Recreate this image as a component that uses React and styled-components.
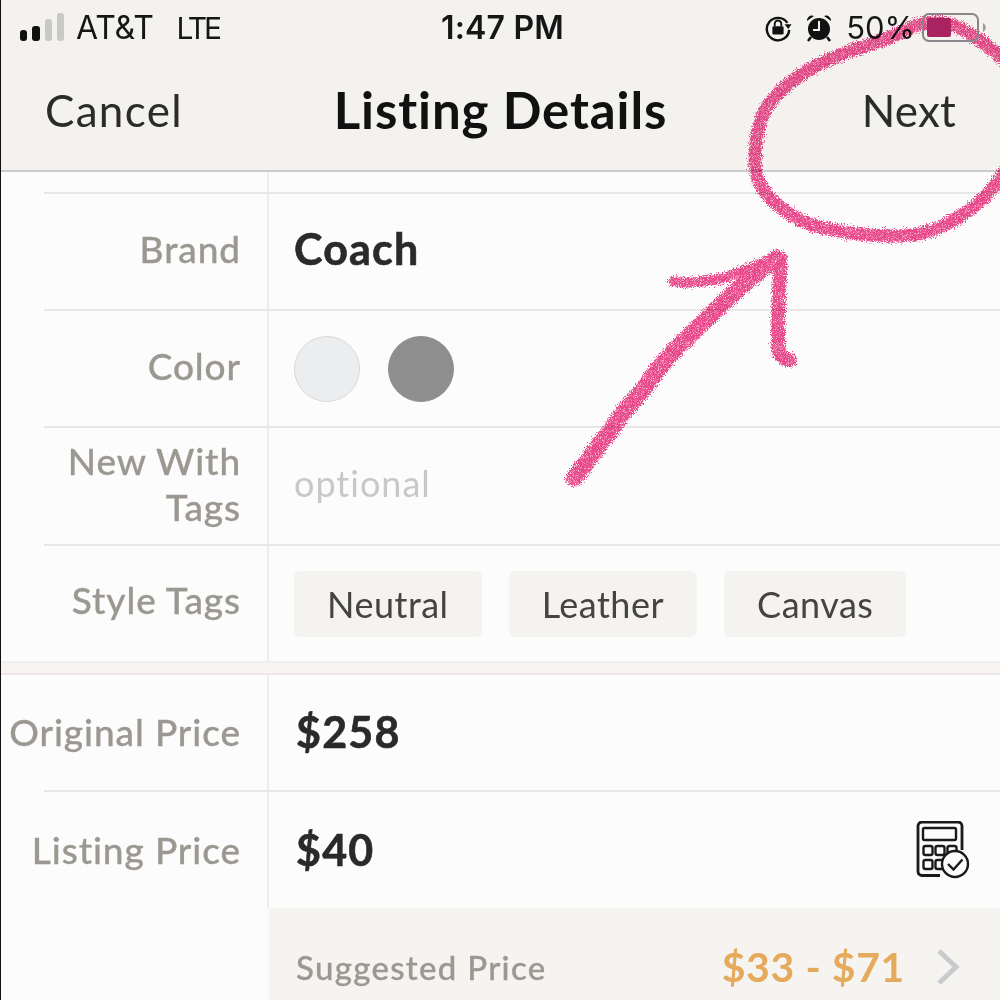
import React from 'react'
import styled, { createGlobalStyle } from 'styled-components'

const Global = createGlobalStyle`
  html, body { margin: 0; padding: 0; background: #fdfcfc; }
  * { box-sizing: border-box; }
`

const Page = styled.div`
  position: relative;
  width: 1000px;
  height: 1000px;
  overflow: hidden;
  background: #fdfcfc;
  border-left: 1px solid #111;
  font-family: Lato, "Open Sans", sans-serif;
`

const Header = styled.header`
  height: 172px;
  background: #f4f2ef;
  border-bottom: 2px solid #cdcccb;
`

const StatusBar = styled.div`
  height: 55px;
  display: grid;
  grid-template-columns: 1fr auto 1fr;
  align-items: center;
  padding: 0 14px 0 18px;
  font-family: Inter, Roboto, sans-serif;
  color: #161616;
`

const StatusLeft = styled.div`
  display: flex;
  align-items: center;
  gap: 11px;
  font-size: 32px;
  letter-spacing: -0.2px;
`

const Carrier = styled.span`
  margin-right: 12px;
`

const Network = styled.span`
  font-size: 30px;
  letter-spacing: -3px;
`

const Clock = styled.div`
  font-size: 32px;
  font-weight: 600;
  letter-spacing: 0.2px;
`

const StatusRight = styled.div`
  display: flex;
  align-items: center;
  justify-content: flex-end;
  gap: 14px;
  font-size: 31px;
`

const BatteryIcon = styled.svg`
  position: relative;
  z-index: 2;
  margin-left: -7px;
`

const Nav = styled.nav`
  height: 115px;
  display: grid;
  grid-template-columns: 1fr auto 1fr;
  align-items: center;
  padding: 0 44px 6px;
  color: #2b2b2b;
  font-size: 44px;
`

const NavCancel = styled.span`
  letter-spacing: 1.3px;
`

const NavNext = styled.span`
  justify-self: end;
  letter-spacing: 0.2px;
`

const Title = styled.h1`
  margin: 0;
  font-size: 51px;
  font-weight: 700;
  letter-spacing: 0.9px;
  color: #111;
`

const Stub = styled.div`
  height: 20px;
  margin-left: 43px;
  width: 225px;
  border-right: 2px solid #efedeb;
`

const Row = styled.div`
  height: ${p => p.$h || 117}px;
  margin-left: 43px;
  display: grid;
  grid-template-columns: 225px 1fr;
  border-top: ${p => (p.$noTop ? 'none' : '2px solid #e8e7e5')};
`

const Label = styled.div`
  display: flex;
  align-items: center;
  justify-content: flex-end;
  text-align: right;
  padding-right: 26px;
  padding-bottom: ${p => p.$lift || 0}px;
  border-right: 2px solid #efedeb;
  color: #9b9892;
  font-size: 37px;
  font-weight: 500;
  line-height: 46px;
  letter-spacing: 0.9px;
  -webkit-text-stroke: 0.3px #9b9892;

  span {
    white-space: ${p => (p.$wrap ? 'pre-line' : 'nowrap')};
    flex-shrink: 0;
  }
`

const Value = styled.div`
  display: flex;
  align-items: center;
  gap: 27px;
  padding-left: 25px;
  padding-right: 30px;
`

const Strong = styled.span`
  margin-bottom: ${p => p.$lift || 0}px;
  margin-left: ${p => p.$indent || 0}px;
  font-size: 43px;
  font-weight: 700;
  color: #2a2a2a;
  letter-spacing: 1.2px;
  -webkit-text-stroke: 0.6px #2a2a2a;
`

const Swatch = styled.span`
  width: 66px;
  height: 66px;
  border-radius: 50%;
  background: ${p => p.$color};
  border: 1px solid ${p => p.$edge};
  & + & {
    margin-left: 1px;
  }
`

const Placeholder = styled.span`
  margin-bottom: 6px;
  font-size: 36px;
  color: #c9c8c6;
  letter-spacing: 1px;
`

const Tag = styled.span`
  height: 66px;
  display: flex;
  align-items: center;
  padding: 0 33px;
  border-radius: 6px;
  background: #f4f3f0;
  color: #45443f;
  font-size: 36px;
  letter-spacing: 0.5px;
`

const Divider = styled.div`
  height: 14px;
  background: #f7f4f1;
  border-top: 2px solid #f0eeeb;
  border-bottom: 2px solid #eee9e7;
`

const CalcIcon = styled.svg`
  margin-left: auto;
`

const Suggested = styled.div`
  margin-left: 268px;
  height: 118px;
  display: flex;
  align-items: center;
  padding: 0 40px 0 27px;
  background: #f6f4f1;
`

const SuggestedLabel = styled.span`
  color: #9b9892;
  font-size: 33px;
  font-weight: 500;
  letter-spacing: 1.3px;
  -webkit-text-stroke: 0.3px #9b9892;
`

const SuggestedRange = styled.span`
  margin-left: auto;
  margin-right: 31px;
  margin-bottom: 2px;
  color: #e5aa5b;
  font-size: 41px;
  font-weight: 700;
  letter-spacing: 0.6px;
`

const Scribble = styled.svg`
  position: absolute;
  left: -1px;
  top: 0;
  pointer-events: none;
  mix-blend-mode: multiply;
`

const SignalIcon = () => (
  <svg width="46" height="30" viewBox="0 0 46 30">
    <rect x="1" y="17" width="7" height="11" rx="3" fill="#111" />
    <rect x="13" y="13" width="8" height="15" rx="3" fill="#111" />
    <rect x="26" y="6" width="7" height="22" rx="3" fill="#c8c8c5" />
    <rect x="38" y="0" width="7" height="28" rx="3" fill="#c8c8c5" />
  </svg>
)

const RotationLockIcon = () => (
  <svg width="28" height="28" viewBox="0 0 30 30" fill="none">
    <path d="M25 9.500A12 12 0 1 0 27 17" stroke="#111" strokeWidth="2.6" />
    <path d="M22 11l7.500 0-3.500 5z" fill="#111" />
    <rect x="9" y="13" width="12" height="9" rx="1.500" fill="#111" />
    <path d="M11.500 13V10.500a3.500 3.500 0 0 1 7 0V13" stroke="#111" strokeWidth="2" />
  </svg>
)

const AlarmIcon = () => (
  <svg width="26" height="28" viewBox="0 0 26 28">
    <circle cx="13" cy="15" r="11" fill="#111" />
    <path d="M1 7a5 5 0 0 1 7-5zM25 7a5 5 0 0 0-7-5z" fill="#111" />
    <path d="M5 23l-3 4M21 23l3 4" stroke="#111" strokeWidth="2.500" />
    <path d="M13 7v9H7" stroke="#f4f2ef" strokeWidth="2" fill="none" />
  </svg>
)

const BatterySvg = () => (
  <BatteryIcon width="64" height="30" viewBox="0 0 64 30" fill="none">
    <rect x="1" y="1" width="55" height="27" rx="6" stroke="#8b8488" strokeWidth="2" />
    <rect x="5" y="5" width="24" height="19" rx="2" fill="#a8235f" />
    <path d="M61 10a5 5 0 0 1 0 9z" fill="#9b9b9b" />
  </BatteryIcon>
)

const CalculatorIcon = () => (
  <CalcIcon width="54" height="58" viewBox="0 0 54 58" fill="none" stroke="#1a1a1a" strokeWidth="2.4">
    <path d="M24 54.500H6a4 4 0 0 1-4-4V5a4 4 0 0 1 4-4h36a4 4 0 0 1 4 4v24" strokeWidth="2.800" />
    <rect x="7" y="7" width="33" height="12" rx="1.500" />
    <rect x="7.500" y="25" width="9" height="9" rx="2" />
    <rect x="19.500" y="25" width="9" height="9" rx="2" />
    <rect x="31.500" y="25" width="9" height="9" rx="2" />
    <rect x="7.500" y="39" width="9" height="9" rx="2" />
    <rect x="19.500" y="39" width="9" height="9" rx="2" />
    <circle cx="39" cy="43" r="13" fill="#fdfcfc" />
    <path d="M32 43l5.500 5.500 9-10" />
  </CalcIcon>
)

const ChevronIcon = () => (
  <svg width="24" height="38" viewBox="0 0 24 38" fill="none">
    <path d="M3 3l17 16L3 35" stroke="#c9c9ce" strokeWidth="5" />
  </svg>
)

const PinkScribble = () => (
  <Scribble width="1000" height="1000" viewBox="0 0 1000 1000" fill="none" stroke="#ea4a8c" strokeLinecap="round" strokeLinejoin="round">
    <defs>
      <filter id="crayon" x="-5%" y="-5%" width="110%" height="110%">
        <feTurbulence type="fractalNoise" baseFrequency="0.9" numOctaves="2" seed="4" result="noise" />
        <feDisplacementMap in="SourceGraphic" in2="noise" scale="10" xChannelSelector="R" yChannelSelector="G" result="rough" />
        <feTurbulence type="fractalNoise" baseFrequency="1.4" numOctaves="1" seed="9" result="grain" />
        <feColorMatrix in="grain" type="matrix" values="0 0 0 0 0  0 0 0 0 0  0 0 0 0 0  3 0 0 0 -0.5" result="mask" />
        <feComposite in="rough" in2="mask" operator="in" />
      </filter>
    </defs>
    <g filter="url(#crayon)">
      <path
        strokeWidth="13"
        d="M1004 60C990 48 978 36 953 25C938 20 925 21 908 29C885 41 860 47 838 56C810 67 785 83 769 104C758 118 755 140 755 165C757 190 774 206 802 221C830 232 865 236 900 236C930 235 950 225 977 204C988 195 996 185 1004 172"
      />
      <path strokeWidth="17" d="M574 478C590 460 598 445 611 430C622 412 640 395 652 378C665 358 690 335 713 313C730 296 755 273 777 258" />
      <path strokeWidth="10" d="M673 282C690 283 715 282 735 274C750 268 765 262 778 257" />
      <path strokeWidth="14" d="M780 258C781 280 778 295 778 315C778 335 777 348 780 354C783 358 787 360 790 360" />
    </g>
  </Scribble>
)

const App = () => (
  <Page>
    <Global />
    <Header>
      <StatusBar>
        <StatusLeft>
          <SignalIcon />
          <Carrier>AT&amp;T</Carrier>
          <Network>LTE</Network>
        </StatusLeft>
        <Clock>1:47 PM</Clock>
        <StatusRight>
          <RotationLockIcon />
          <AlarmIcon />
          <span>50%</span>
          <BatterySvg />
        </StatusRight>
      </StatusBar>
      <Nav>
        <NavCancel>Cancel</NavCancel>
        <Title>Listing Details</Title>
        <NavNext>Next</NavNext>
      </Nav>
    </Header>
    <Stub />
    <Row>
      <Label $lift={6}><span>Brand</span></Label>
      <Value><Strong $lift={6}>Coach</Strong></Value>
    </Row>
    <Row>
      <Label $lift={6}><span>Color</span></Label>
      <Value>
        <Swatch $color="#ecedef" $edge="#d9d9d9" />
        <Swatch $color="#8e8e8e" $edge="#8e8e8e" />
      </Value>
    </Row>
    <Row $h={118}>
      <Label $wrap $lift={5}><span>{'New With\nTags'}</span></Label>
      <Value><Placeholder>optional</Placeholder></Value>
    </Row>
    <Row $h={117}>
      <Label $lift={7}><span>Style Tags</span></Label>
      <Value>
        <Tag>Neutral</Tag>
        <Tag>Leather</Tag>
        <Tag>Canvas</Tag>
      </Value>
    </Row>
    <Divider />
    <Row $noTop $h={115}>
      <Label $lift={2}><span>Original Price</span></Label>
      <Value><Strong $lift={2} $indent={2}>$258</Strong></Value>
    </Row>
    <Row $h={118}>
      <Label><span>Listing Price</span></Label>
      <Value>
        <Strong $lift={2} $indent={2}>$40</Strong>
        <CalculatorIcon />
      </Value>
    </Row>
    <Suggested>
      <SuggestedLabel>Suggested Price</SuggestedLabel>
      <SuggestedRange>$33 - $71</SuggestedRange>
      <ChevronIcon />
    </Suggested>
    <PinkScribble />
  </Page>
)

export default App
